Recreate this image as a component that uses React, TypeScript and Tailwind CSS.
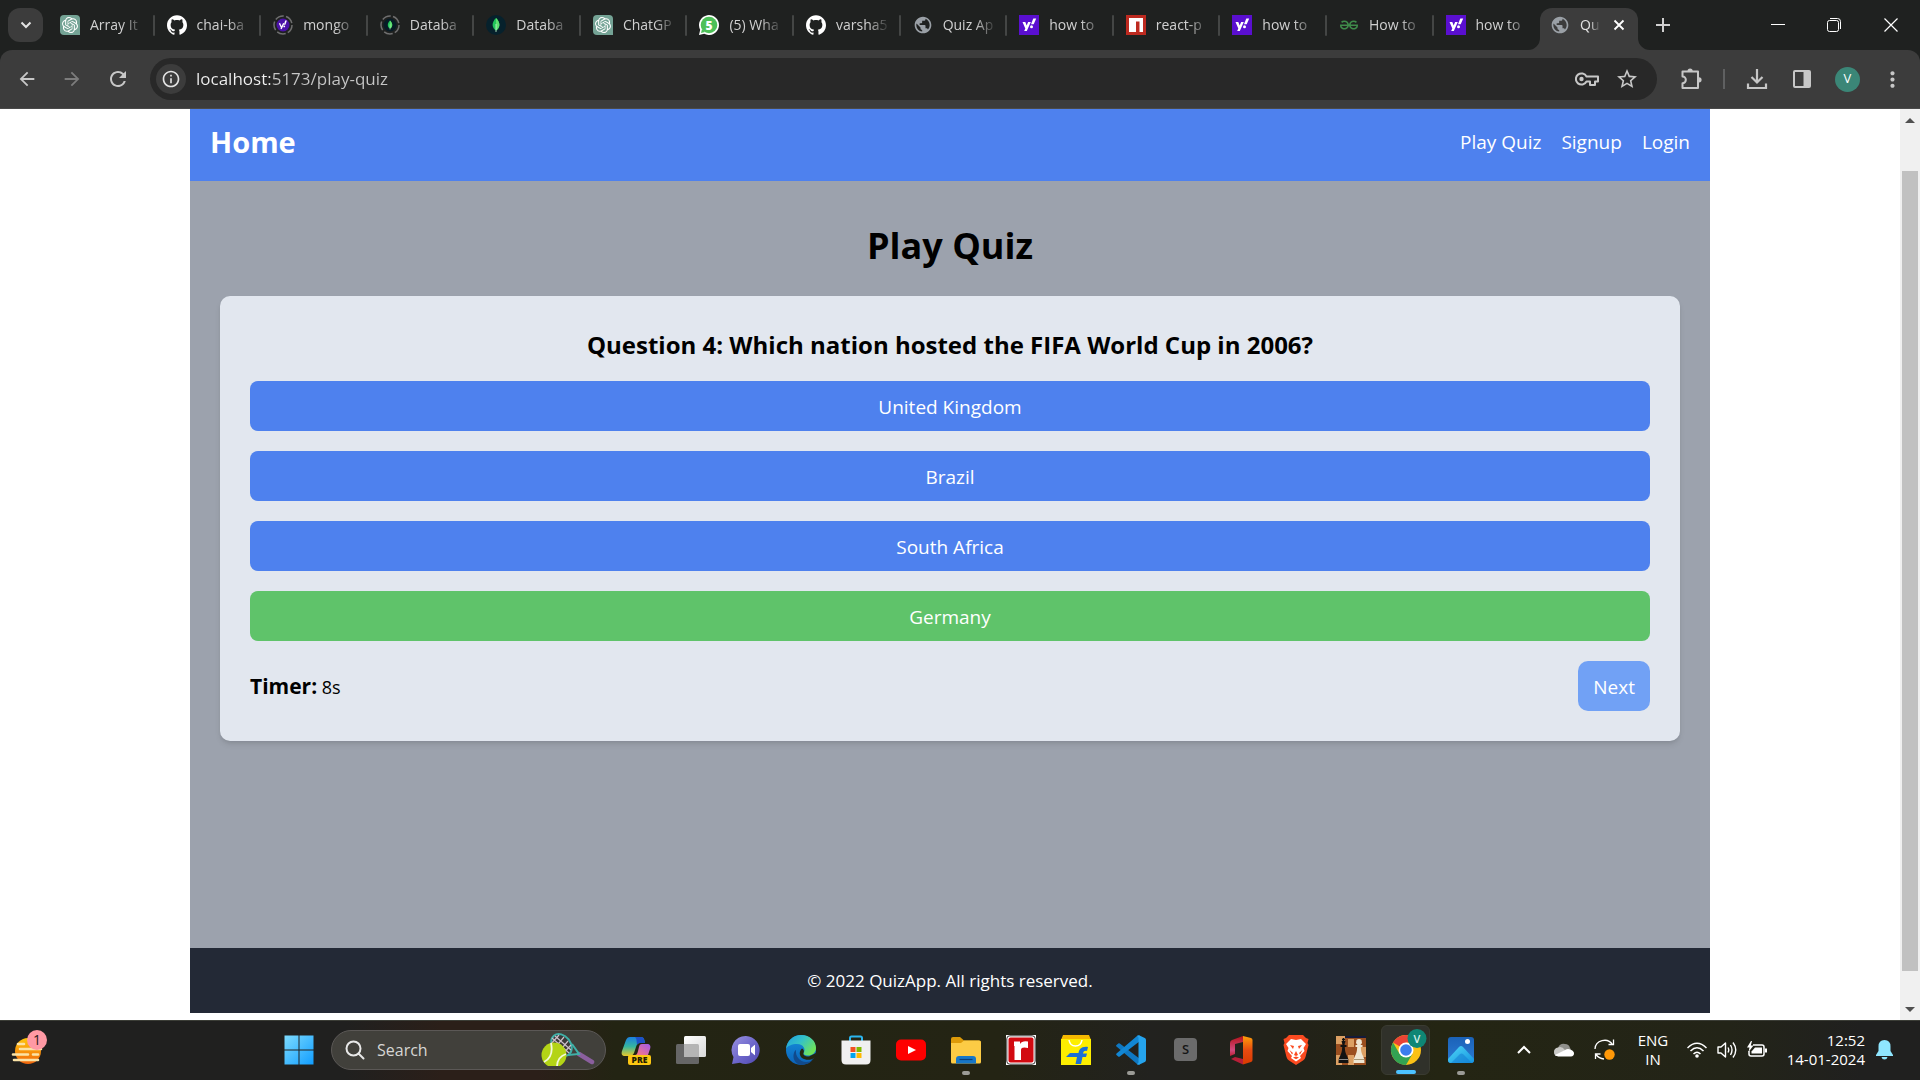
import type { ReactNode } from "react";
import { SiOpenai, SiGithub, SiGeeksforgeeks } from "react-icons/si";
import { MdArrowBack, MdArrowForward, MdRefresh, MdInfoOutline, MdMoreVert, MdStarOutline, MdPublic } from "react-icons/md";

/* ---------- Favicons ---------- */

const OpenAiFavicon = () => (
  <span className="flex h-5 w-5 items-center justify-center rounded-t-sm rounded-bl-sm bg-[#74a395]">
    <SiOpenai className="h-4 w-4 text-white" />
  </span>
);

const GithubFavicon = () => <SiGithub className="h-5 w-5 text-white" />;

const LoadingRing = ({ children }: { children: ReactNode }) => (
  <svg viewBox="0 0 20 20" className="h-5 w-5">
    <circle cx="10" cy="10" r="9" fill="none" stroke="#6f6f6f" strokeWidth="1.5" strokeDasharray="9 2.3" />
    {children}
  </svg>
);

const YahooSleeping = () => (
  <LoadingRing>
    <circle cx="10" cy="10" r="6.500" fill="#4b11a8" />
    <g transform="translate(4.600 4.500) scale(.53)">
      <path d="M3.500 7L7.800 16M11.500 7L6.500 18" stroke="#fff" strokeWidth="2.600" />
      <path d="M14.300 2H17.500L14.700 10H12Z" fill="#fff" />
      <circle cx="12.500" cy="13" r="1.700" fill="#fff" />
    </g>
  </LoadingRing>
);

const Leaf = ({ scale = 1 }: { scale?: number }) => (
  <g transform={`translate(10 10) scale(${scale})`}>
    <path d="M0-7C-5-2-4 3 0 5.500C4 3 5-2 0-7Z" fill="#21c45a" />
    <path d="M0-7C5-2 4 3 0 5.500Z" fill="#5de06f" />
    <path d="M0-1V7" stroke="#c8f5cf" strokeWidth=".8" />
  </g>
);

const MongoSleeping = () => (
  <LoadingRing>
    <circle cx="10" cy="10" r="6.500" fill="#071b26" />
    <Leaf scale={0.65} />
  </LoadingRing>
);

const MongoFavicon = () => (
  <svg viewBox="0 0 20 20" className="h-5 w-5">
    <circle cx="10" cy="10" r="10" fill="#06212c" />
    <Leaf />
  </svg>
);

const WhatsappFavicon = () => (
  <svg viewBox="0 0 20 20" className="h-5 w-5">
    <path d="M0 20L1.200 14.800A10 10 0 1 1 5.200 18.800Z" fill="#fff" />
    <circle cx="10" cy="10" r="8.300" fill="#4dc058" />
    <path d="M2 18L3 14L6 17Z" fill="#4dc058" />
    <text x="10" y="14.500" textAnchor="middle" fontSize="12" fontWeight="800" fontFamily="Open Sans, sans-serif" fill="#fff">
      5
    </text>
  </svg>
);

const YahooFavicon = () => (
  <svg viewBox="0 0 20 20" className="h-5 w-5">
    <path d="M0 0H20V20H0Z" fill="#5a0fd0" />
    <path d="M3.500 7H6.300L7.700 10.500L9.100 7H11.800L7.800 16H5.200L6.300 13.500Z" fill="#fff" />
    <path d="M14.300 3.500H17.200L14.700 9.300H12Z" fill="#fff" />
    <circle cx="12.500" cy="11.800" r="1.500" fill="#fff" />
  </svg>
);

const NpmFavicon = () => (
  <svg viewBox="0 0 20 20" className="h-5 w-5">
    <path d="M0 0H20V20H0Z" fill="#bd2a20" />
    <path d="M3 3H17V17H13.500V6.500H10V17H3Z" fill="#fff" />
  </svg>
);

const GfgFavicon = () => <SiGeeksforgeeks className="h-5 w-5 p-px text-[#3f8a4a]" />;
const GlobeFavicon = () => <MdPublic className="h-5 w-5 text-[#9aa0a6]" />;

const tabs: { label: string; icon: ReactNode }[] = [
  { label: "Array It", icon: <OpenAiFavicon /> },
  { label: "chai-ba", icon: <GithubFavicon /> },
  { label: "mongo", icon: <YahooSleeping /> },
  { label: "Databa", icon: <MongoSleeping /> },
  { label: "Databa", icon: <MongoFavicon /> },
  { label: "ChatGP", icon: <OpenAiFavicon /> },
  { label: "(5) Wha", icon: <WhatsappFavicon /> },
  { label: "varsha5", icon: <GithubFavicon /> },
  { label: "Quiz Ap", icon: <GlobeFavicon /> },
  { label: "how to", icon: <YahooFavicon /> },
  { label: "react-p", icon: <NpmFavicon /> },
  { label: "how to", icon: <YahooFavicon /> },
  { label: "How to", icon: <GfgFavicon /> },
  { label: "how to", icon: <YahooFavicon /> },
];

function TabStrip() {
  return (
    <div className="flex h-[50px] shrink-0 items-center bg-[#1f2120] text-[#d0d0d0]">
      <div className="flex w-12 shrink-0 pl-2">
        <button aria-label="Search tabs" className="flex h-[34px] w-[35px] items-center justify-center rounded-xl bg-[#3c3c3c]">
          <svg viewBox="0 0 12 12" className="h-3 w-3" fill="none" stroke="#e3e3e3" strokeWidth="2">
            <path d="M1.500 3.500L6 8L10.500 3.500" />
          </svg>
        </button>
      </div>
      <div className="flex min-w-0 flex-1">
        {tabs.map((t, i) => (
          <button key={i} className="flex min-w-0 flex-1 items-center pl-3 text-left">
            <span className="shrink-0">{t.icon}</span>
            <span className="ml-[10px] mr-1 block min-w-0 flex-1 overflow-hidden whitespace-nowrap text-[14px] leading-5 [mask-image:linear-gradient(to_right,black_32px,transparent_54px)]">
              {t.label}
            </span>
            <span className={i === tabs.length - 1 ? "w-[2px]" : "h-[21px] w-[2px] rounded bg-[#444645]"} />
          </button>
        ))}
      </div>
      <div className="relative flex h-[42px] w-[98px] shrink-0 items-center self-end rounded-t-xl bg-[#3c3c3c] pb-2 pl-[10px] text-[#e3e3e3]">
        <svg viewBox="0 0 12 12" className="absolute -left-3 bottom-0 h-3 w-3">
          <path d="M12 0V12H0A12 12 0 0 0 12 0Z" fill="#3c3c3c" />
        </svg>
        <svg viewBox="0 0 12 12" className="absolute -right-3 bottom-0 h-3 w-3">
          <path d="M0 0V12H12A12 12 0 0 1 0 0Z" fill="#3c3c3c" />
        </svg>
        <GlobeFavicon />
        <span className="ml-[10px] block w-5 whitespace-nowrap text-[14px] leading-5 [mask-image:linear-gradient(to_right,black_50%,transparent)]">
          Qu
        </span>
        <button aria-label="Close tab" className="ml-[9px] p-1">
          <svg viewBox="0 0 12 12" className="h-3 w-3" stroke="#fff" strokeWidth="1.800">
            <path d="M1.500 1.500L10.500 10.500M10.500 1.500L1.500 10.500" />
          </svg>
        </button>
      </div>
      <button aria-label="New tab" className="ml-[18px] shrink-0">
        <svg viewBox="0 0 14 14" className="h-[14px] w-[14px]" stroke="#d0d0d0" strokeWidth="2">
          <path d="M7 0V14M0 7H14" />
        </svg>
      </button>
      <div className="flex w-[250px] shrink-0 justify-end">
        <button aria-label="Minimise" className="flex h-10 w-14 items-center justify-center">
          <svg viewBox="0 0 14 14" className="h-[14px] w-[14px]" stroke="#fff">
            <path d="M0 6.500H14" />
          </svg>
        </button>
        <button aria-label="Restore" className="flex h-10 w-14 items-center justify-center">
          <svg viewBox="0 0 14 14" className="h-[14px] w-[14px]" stroke="#fff" fill="none">
            <rect x=".5" y="2.500" width="11" height="11" rx="2" />
            <path d="M3 .5H10.500A3 3 0 0 1 13.500 3.500V11" />
          </svg>
        </button>
        <button aria-label="Close" className="flex h-10 w-[58px] items-center justify-center">
          <svg viewBox="0 0 14 14" className="h-[14px] w-[14px]" stroke="#fff" strokeWidth="1.200">
            <path d="M.5 .5L13.500 13.500M13.500 .5L.5 13.500" />
          </svg>
        </button>
      </div>
    </div>
  );
}

function Toolbar() {
  return (
    <div className="shrink-0 bg-[#1f2120]">
      <div className="flex h-[59px] items-center rounded-t-xl border-b border-[#4a4a4a] bg-[#3c3c3c] text-[#c7c7c7]">
        <div className="flex w-[150px] shrink-0 items-center pl-4">
          <button aria-label="Back" className="w-[45px]"><MdArrowBack className="h-[22px] w-[22px]" /></button>
          <button aria-label="Forward" className="w-[45px] text-[#7c7c7c]"><MdArrowForward className="h-[22px] w-[22px]" /></button>
          <button aria-label="Reload"><MdRefresh className="h-6 w-6" /></button>
        </div>
        <div className="flex h-[42px] min-w-0 flex-1 items-center rounded-full bg-[#282828] pl-[6px] pr-[18px]">
          <button aria-label="Site information" className="flex h-[30px] w-[30px] items-center justify-center rounded-full bg-[#3c3c3c]">
            <MdInfoOutline className="h-5 w-5 text-[#e3e3e3]" />
          </button>
          <input
            aria-label="Address"
            defaultValue="localhost:5173/play-quiz"
            className="ml-[10px] min-w-0 flex-1 bg-[linear-gradient(90deg,#f1f1f1_74px,#c7c7c7_74px)] bg-clip-text text-[17px] leading-6 text-transparent outline-none"
          />
          <button aria-label="Passwords">
            <svg viewBox="0 0 24 14" className="h-[14px] w-6" fill="none" stroke="#c7c7c7" strokeWidth="2">
              <path d="M11.500 4.500A5.600 5.600 0 1 0 11.500 9.500H15V13H20V9.500H23V4.500Z" strokeLinejoin="round" />
              <circle cx="6.500" cy="7" r="2.200" fill="#c7c7c7" stroke="none" />
            </svg>
          </button>
          <button aria-label="Bookmark" className="ml-4"><MdStarOutline className="h-6 w-6" /></button>
        </div>
        <div className="flex w-[263px] shrink-0 items-center pl-[23px]">
          <button aria-label="Extensions">
            <svg viewBox="0 0 22 22" className="h-[22px] w-[22px]" fill="none" stroke="#c7c7c7" strokeWidth="2" strokeLinejoin="round">
              <path d="M2.500 3.500H18V20H2.500V15.200A3 3 0 0 0 2.500 8.500Z" />
              <path d="M7.500 3A2.600 2.600 0 0 1 12.700 3ZM19 9.200A2.600 2.600 0 0 1 19 14.400Z" fill="#c7c7c7" stroke="none" />
            </svg>
          </button>
          <span className="ml-[21px] h-5 w-[2px] bg-[#5f6061]" />
          <button aria-label="Downloads" className="ml-[21px]">
            <svg viewBox="0 0 22 22" className="h-[22px] w-[22px]" fill="none" stroke="#c7c7c7" strokeWidth="2.200">
              <path d="M11 1V14M5.500 9L11 14.500L16.500 9M2 15.500V20H20V15.500" />
            </svg>
          </button>
          <button aria-label="Side panel" className="ml-6">
            <svg viewBox="0 0 20 20" className="h-5 w-5">
              <rect x="2" y="2" width="16" height="16" rx="1" fill="none" stroke="#c7c7c7" strokeWidth="2" />
              <path d="M11.500 2H18V18H11.500Z" fill="#c7c7c7" />
            </svg>
          </button>
          <button aria-label="Profile" className="ml-[23px] flex h-[25px] w-[25px] items-center justify-center rounded-full bg-[#3b8677] text-[13px] text-white">
            V
          </button>
          <button aria-label="Menu" className="ml-5"><MdMoreVert className="h-[25px] w-[25px]" /></button>
        </div>
      </div>
    </div>
  );
}

/* ---------- Quiz page ---------- */

const answers = [
  { text: "United Kingdom", style: "bg-[#4e81ee]" },
  { text: "Brazil", style: "bg-[#4e81ee]" },
  { text: "South Africa", style: "bg-[#4e81ee]" },
  { text: "Germany", style: "bg-[#5fc36a]" },
];

function QuizPage() {
  return (
    <div className="mx-auto flex w-4/5 flex-col">
      <nav className="flex h-[72px] shrink-0 items-center justify-between bg-[#4e81ee] px-5 pb-[6px] text-white">
        <a href="#home" className="text-[29px] font-bold leading-9">Home</a>
        <div className="flex gap-5 text-[19px] leading-[30px]">
          <a href="#play">Play Quiz</a>
          <a href="#signup">Signup</a>
          <a href="#login">Login</a>
        </div>
      </nav>
      <main className="flex-1 bg-[#9ca2ad] px-[30px] pt-[42px] text-black">
        <h1 className="mb-7 text-center text-[36px] font-bold leading-[45px]">Play Quiz</h1>
        <section className="rounded-[10px] bg-[#e2e7ef] p-[30px] shadow-md">
          <h2 className="mb-[17px] text-center text-[24px] font-bold leading-[38px]">
            Question 4: Which nation hosted the FIFA World Cup in 2006?
          </h2>
          <div className="grid gap-5">
            {answers.map((a) => (
              <button key={a.text} className={`${a.style} h-[50px] w-full rounded-lg pt-[2px] text-[19px] leading-[30px] text-white`}>
                {a.text}
              </button>
            ))}
          </div>
          <div className="mt-5 flex items-center justify-between">
            <p className="text-[18px] leading-[30px]">
              <span className="text-[21px] font-bold">Timer:</span> 8s
            </p>
            <button className="h-[50px] rounded-[10px] bg-[#71a1f5] px-[15px] pt-[2px] text-[19px] leading-[30px] text-white">Next</button>
          </div>
        </section>
      </main>
      <footer className="flex h-[65px] shrink-0 items-center justify-center bg-[#232936] text-[17px] leading-6 text-white">
        <p>© 2022 QuizApp. All rights reserved.</p>
      </footer>
    </div>
  );
}

function Scrollbar() {
  return (
    <div className="flex w-5 shrink-0 flex-col items-center bg-[#f0f0f0]">
      <svg viewBox="0 0 10 22" className="h-[22px] w-[10px]"><path d="M0 14L5 9L10 14Z" fill="#505050" /></svg>
      <div className="flex w-4 flex-1 flex-col">
        <div className="flex-[40]" />
        <div className="flex-[800] bg-[#c1c1c1]" />
        <div className="flex-[27]" />
      </div>
      <svg viewBox="0 0 10 22" className="h-[22px] w-[10px]"><path d="M0 9L5 14L10 9Z" fill="#505050" /></svg>
    </div>
  );
}

/* ---------- Taskbar ---------- */

const Copilot = () => (
  <svg viewBox="0 0 30 30" className="h-[30px] w-[30px]">
    <defs>
      <linearGradient id="cpA" x1="0" y1="0" x2="0" y2="1">
        <stop offset="0" stopColor="#1b7fe0" /><stop offset=".5" stopColor="#35b5a0" /><stop offset="1" stopColor="#e8c928" />
      </linearGradient>
      <linearGradient id="cpB" x1="1" y1="0" x2="0" y2="1">
        <stop offset="0" stopColor="#a259ee" /><stop offset="1" stopColor="#ff7a7a" />
      </linearGradient>
    </defs>
    <path d="M9 2H20C23 2 23.500 5 24 8H19C17 8 16 9 15 12L13 18C12 20 11 21 8 21H4C1 21 0 19 1 16L5 5C6 3 7 2 9 2Z" fill="url(#cpA)" />
    <path d="M14 2H20C23 2 23.500 5 24 8H19C17 8 16.500 9 16 10C15.500 6 16 4 14 2Z" fill="#1d50c8" />
    <path d="M21 9H26C29 9 30 11 29 14L27 20H14C16 20 16.500 18 17 16L18 12C18.500 10 19 9 21 9Z" fill="url(#cpB)" />
    <rect x="7" y="20" width="23" height="10" rx="2" fill="#fcc712" />
    <text x="18.500" y="28.300" textAnchor="middle" fontSize="8.500" fontWeight="800" fontFamily="Open Sans, sans-serif" fill="#241d00">PRE</text>
  </svg>
);

const TaskView = () => (
  <svg viewBox="0 0 30 30" className="h-[30px] w-[30px]">
    <defs>
      <linearGradient id="tvA" x1="0" y1="0" x2="1" y2="1"><stop stopColor="#fff" /><stop offset="1" stopColor="#d9d9d9" /></linearGradient>
    </defs>
    <rect x="0" y="9" width="23" height="20" rx="1.500" fill="#666" />
    <rect x="8" y="1" width="22" height="21" rx="1.500" fill="url(#tvA)" />
    <path d="M8 9H21.500Q23 9 23 10.500V22H9.500Q8 22 8 20.500Z" fill="#b5b5b5" />
  </svg>
);

const Chat = () => (
  <svg viewBox="0 0 30 30" className="h-[30px] w-[30px]">
    <defs>
      <linearGradient id="chA" x1="0" y1="0" x2="1" y2="1"><stop stopColor="#9a93e0" /><stop offset=".5" stopColor="#6f68cc" /><stop offset="1" stopColor="#4f48b0" /></linearGradient>
    </defs>
    <path d="M15 1A14 14 0 1 1 9 27.800L1 29L2.500 22A14 14 0 0 1 15 1Z" fill="url(#chA)" />
    <rect x="7" y="9" width="12" height="12" rx="2" fill="#fff" />
    <path d="M20 13L23.500 10Q24 9.500 24 10.500V19.500Q24 20.500 23.500 20L20 17Z" fill="#fff" />
  </svg>
);

const Edge = () => (
  <svg viewBox="0 0 30 30" className="h-[30px] w-[30px]">
    <defs>
      <linearGradient id="edA" x1="0" y1="0" x2="1" y2=".6"><stop stopColor="#1f9de0" /><stop offset=".5" stopColor="#34c2c8" /><stop offset="1" stopColor="#6fe35a" /></linearGradient>
      <linearGradient id="edB" x1="0" y1="0" x2="0" y2="1"><stop stopColor="#1590dd" /><stop offset="1" stopColor="#0b62b8" /></linearGradient>
    </defs>
    <circle cx="15" cy="15" r="15" fill="url(#edB)" />
    <path d="M0 14C1 5 8 0 15 0C24 0 30 6 30 13C30 18 26 20.500 22 20.500C19 20.500 17 19 17.500 18C20 15 18 9 11 9C6 9 1 11 0 14Z" fill="url(#edA)" />
    <path d="M10 15C9 21 14 27 20 27C23 27 26 26 28 23C25 28 20 30 15 30C10 29 7 25 7.500 20C8 17 9 15.500 10 15Z" fill="#114a8b" />
    <path d="M17.500 18C16.500 20 20 22 23 21.500L30 18C30 26 20 26 16 23C13 20.500 13 16 16 13.500C18.500 15 18 17 17.500 18Z" fill="#25260f" />
  </svg>
);

const Store = () => (
  <svg viewBox="0 0 30 30" className="h-[30px] w-[30px]">
    <path d="M9 6V3Q9 1.500 10.500 1.500H19.500Q21 1.500 21 3V6" fill="none" stroke="#2bb5ee" strokeWidth="2" />
    <path d="M.5 5.500H29.500V25Q29.500 29.500 25 29.500H5Q.5 29.500 .5 25Z" fill="#f0f0f0" />
    <path d="M9.500 12H14.500V17H9.500Z" fill="#f25022" />
    <path d="M15.500 12H20.500V17H15.500Z" fill="#7fba00" />
    <path d="M9.500 18H14.500V23H9.500Z" fill="#00a4ef" />
    <path d="M15.500 18H20.500V23H15.500Z" fill="#ffb900" />
  </svg>
);

const YouTube = () => (
  <svg viewBox="0 0 30 30" className="h-[30px] w-[30px]">
    <rect x="0" y="4.500" width="30" height="21" rx="5" fill="#fe0000" />
    <path d="M12 11L20 15L12 19Z" fill="#fff" />
  </svg>
);

const Folder = () => (
  <svg viewBox="0 0 30 30" className="h-[30px] w-[30px]">
    <path d="M0 4Q0 2 2 2H9L13 5.500H28Q30 5.500 30 7V12H0Z" fill="#dd9a09" />
    <path d="M0 8H10L13 5.500H28Q30 5.500 30 7.500V27Q30 28.500 28.500 28.500H1.500Q0 28.500 0 27Z" fill="#fccb45" />
    <path d="M5 28.500V24Q5 21 8 21H22Q25 21 25 24V28.500Z" fill="#1777c8" />
    <path d="M8.500 24.500H21.500" stroke="#0b3f7a" strokeWidth="1.200" />
  </svg>
);

const RedR = () => (
  <svg viewBox="0 0 30 30" className="h-[30px] w-[30px]">
    <path d="M0 0H30V30H0Z" fill="#fff" />
    <rect x=".8" y=".8" width="28.400" height="28.400" rx="3" fill="#fff" stroke="#333" />
    <rect x="2.500" y="2.500" width="25" height="25" rx="2" fill="#d20a11" />
    <path d="M8 6.500H14V9Q16 5.500 22 6.500V13Q15 11.500 15 15V25H8.500V11H8Z" fill="#fff" />
  </svg>
);

const Flipkart = () => (
  <svg viewBox="0 0 30 30" className="h-[30px] w-[30px]">
    <path d="M2 0H28L30 5H0Z" fill="#f5b800" />
    <path d="M0 4H30V30H0Z" fill="#fdee00" />
    <path d="M8 5Q9 11 14.500 11T21 5" fill="none" stroke="#fff" strokeWidth="1.500" />
    <path d="M27 12C20 11 18 15 17.500 18H9L5 22H16L14.500 29H20L21.500 22H25L26 18.500H22C22.500 16 24 15.500 26 16Z" fill="#1b6fd6" />
  </svg>
);

const VsCode = () => (
  <svg viewBox="0 0 30 30" className="h-[30px] w-[30px]">
    <path d="M.5 11.500Q-.3 10.700 .5 10L2.200 8.500Q3 8 3.800 8.500L24 24V29.500L21 29Z" fill="#0f78c2" />
    <path d="M.5 18.500Q-.3 19.300 .5 20L2.200 21.500Q3 22 3.800 21.500L24 6V.5L21 1Z" fill="#1287d4" />
    <path d="M21 .8Q22 -.2 23.500 .4L28.800 3Q30 3.600 30 5V25Q30 26.400 28.800 27L23.500 29.600Q22 30.200 21 29.200L22.500 27.500V2.500Z" fill="#25a4ee" />
  </svg>
);

const LetterS = () => (
  <span className="flex h-[23px] w-[23px] items-center justify-center rounded-sm bg-[#6b6b6b] text-[13px] font-semibold leading-none text-[#161616]">S</span>
);

const Office = () => (
  <svg viewBox="0 0 30 30" className="h-[30px] w-[30px]">
    <defs>
      <linearGradient id="ofA" x1="0" y1="0" x2="0" y2="1"><stop stopColor="#b3121a" /><stop offset=".7" stopColor="#d14a7e" /><stop offset="1" stopColor="#c02035" /></linearGradient>
      <linearGradient id="ofB" x1="0" y1="0" x2="0" y2="1"><stop stopColor="#ff9f0a" /><stop offset=".5" stopColor="#e84a10" /><stop offset="1" stopColor="#d83b01" /></linearGradient>
    </defs>
    <path d="M17 1L6 5Q4 6 4 8V21L9 19V9L17 7Z" fill="url(#ofA)" />
    <path d="M9 22L17 24V29.500L5 24Z" fill="#b81f38" />
    <path d="M17 1L25 3Q26.500 3.500 26.500 5V25Q26.500 26.500 25 27L17 29.500Z" fill="url(#ofB)" />
  </svg>
);

const Brave = () => (
  <svg viewBox="0 0 30 30" className="h-[30px] w-[30px]">
    <path d="M8 0H22L25 3L27.500 4L26.500 8L27.500 10L24.500 22Q24 24 22 25.500L15 30L8 25.500Q6 24 5.500 22L2.500 10L3.500 8L2.500 4L5 3Z" fill="#fb4a20" />
    <path d="M10 4L15 5L20 4L25 9L22.500 13L23.500 16L19 21L20 23L15 26.500L10 23L11 21L6.500 16L7.500 13L5 9Z" fill="#fff" />
    <path d="M9 10L13 11L12 14ZM21 10L17 11L18 14ZM15 16L17 20L15 21L13 20ZM8.500 15L12 18L11 19.500ZM21.500 15L18 18L19 19.500ZM12 22.500L15 21.500L18 22.500L15 24.200Z" fill="#fb4a20" />
  </svg>
);

const Chess = () => (
  <svg viewBox="0 0 30 30" className="h-[30px] w-[30px]">
    <path d="M0 1H30V30H0Z" fill="#9b4f1f" />
    <path d="M0 1H9V9H0ZM12 4H18V12H12ZM0 20H6V30H0ZM24 12H30V22H24ZM12 20H18V30H12Z" fill="#dca063" />
    <path d="M9 1H30V3H9Z" fill="#131a3a" />
    <path d="M7.500 3V6M6 4.500H9" stroke="#111" strokeWidth="1.300" />
    <path d="M5.500 6H9.500L8.500 10H10.500V12H8.800Q9 18 11 21Q13 24 12.500 28H2.500Q2 24 4 21Q6 18 6.200 12H4.500V10H6.500Z" fill="#121212" />
    <path d="M3 24.500H12" stroke="#8a8a8a" />
    <path d="M20.500 5Q23 3 25.500 5L26 8L24.500 10H26.500V12H24.800Q25 18 27 21Q29 24 28.500 28H17.500Q17 24 19 21Q21 18 21.200 12H19.500V10H21.500L20 8Z" fill="#efe6d2" />
    <path d="M18 24.500H28" stroke="#a99a78" />
  </svg>
);

const ChromeLogo = () => (
  <svg viewBox="0 0 34 34" className="h-[34px] w-[34px] overflow-visible">
    <g transform="translate(15 19)">
      <circle r="15" fill="#fbc116" />
      <path d="M0 0L-13 -7.500A15 15 0 0 1 13 -7.500H0Z" fill="#ea4335" />
      <path d="M-13 -7.500A15 15 0 0 0 0 15L6.500 3.750L0 7L-6.500 3.750Z" fill="#33a353" />
      <circle r="7.500" fill="#fff" />
      <circle r="5.800" fill="#3b7ded" />
    </g>
    <circle cx="26" cy="7.500" r="9.500" fill="#0f8675" />
    <text x="26" y="11.500" textAnchor="middle" fontSize="11" fontWeight="600" fontFamily="Open Sans, sans-serif" fill="#d5efea">V</text>
  </svg>
);

const Photos = () => (
  <svg viewBox="0 0 30 30" className="h-[30px] w-[30px]">
    <defs>
      <linearGradient id="phA" x1="0" y1="0" x2="0" y2="1"><stop stopColor="#1b62b8" /><stop offset="1" stopColor="#2b7bd4" /></linearGradient>
      <linearGradient id="phB" x1="0" y1="0" x2="1" y2="1"><stop stopColor="#50d7f7" /><stop offset="1" stopColor="#1494e0" /></linearGradient>
    </defs>
    <rect x="2" y="2" width="26" height="26" rx="3" fill="url(#phA)" />
    <path d="M2 24L13 12Q15 10 17 12L28 24V25Q28 28 25 28H5Q2 28 2 25Z" fill="url(#phB)" />
    <path d="M5 28L14 19Q15.500 18 17 19L26 28Z" fill="#1278cf" opacity=".5" />
    <circle cx="21.500" cy="6.500" r="2.500" fill="#fff" />
  </svg>
);

const apps: { name: string; icon: ReactNode; mark?: "open" | "active" }[] = [
  { name: "Copilot", icon: <Copilot /> },
  { name: "Task view", icon: <TaskView /> },
  { name: "Chat", icon: <Chat /> },
  { name: "Edge", icon: <Edge /> },
  { name: "Store", icon: <Store /> },
  { name: "YouTube", icon: <YouTube /> },
  { name: "File Explorer", icon: <Folder />, mark: "open" },
  { name: "Reader", icon: <RedR /> },
  { name: "Flipkart", icon: <Flipkart /> },
  { name: "Visual Studio Code", icon: <VsCode />, mark: "open" },
  { name: "S", icon: <LetterS /> },
  { name: "Office", icon: <Office /> },
  { name: "Brave", icon: <Brave /> },
  { name: "Chess", icon: <Chess /> },
  { name: "Chrome", icon: <ChromeLogo />, mark: "active" },
  { name: "Photos", icon: <Photos />, mark: "open" },
];

const Weather = () => (
  <svg viewBox="0 0 40 40" className="h-10 w-10">
    <defs>
      <linearGradient id="sun" x1="0" y1="0" x2="0" y2="1"><stop stopColor="#ffc60a" /><stop offset="1" stopColor="#f0650c" /></linearGradient>
    </defs>
    <circle cx="18" cy="21" r="13" fill="url(#sun)" />
    <path d="M8 14H14M10 19H31M3 24.500H18M23 24.500H28M4 30H28" stroke="#fbe3a6" strokeWidth="2.600" strokeLinecap="round" />
    <circle cx="27" cy="10" r="10" fill="#ff99a4" />
    <text x="27" y="15" textAnchor="middle" fontSize="14" fontFamily="Open Sans, sans-serif" fill="#2b1a1c">1</text>
  </svg>
);

const Tennis = () => (
  <svg viewBox="0 0 54 34" className="h-[34px] w-[54px]">
    <path d="M38 21L51 29" stroke="#8a5f9e" strokeWidth="4.500" strokeLinecap="round" />
    <path d="M27 22L38 21L31 11" fill="none" stroke="#3fb0a8" strokeWidth="2" />
    <ellipse cx="20.500" cy="12" rx="9" ry="12" transform="rotate(-38 20.500 12)" fill="#3b3838" stroke="#3fb0a8" strokeWidth="2" />
    <path d="M11 5L28 20M14 3L30 17M11 10L22 21M13 16L23 4M17 20L27 8M10 11L18 2M21 22L30 12" stroke="#cdbfca" strokeWidth="1.200" />
    <clipPath id="ballClip"><path d="M0 0H54V33H0Z" /></clipPath>
    <g clipPath="url(#ballClip)">
      <circle cx="13" cy="22" r="12.500" fill="#b4d416" />
      <path d="M3 29Q13 24 10 10M16 34Q16 24 25 21" fill="none" stroke="#f3f8dc" strokeWidth="1.800" />
    </g>
  </svg>
);

function Taskbar() {
  return (
    <div className="flex h-[60px] shrink-0 items-center border-t border-[#3b3d36] bg-[linear-gradient(90deg,#20201f_0%,#20201f_18%,#2b1f19_23%,#2b1f19_28%,#232413_32%,#242414_52%,#22221f_60%,#222218_68%,#242513_75%,#232418_90%,#20201f_97%)] pb-[2px] text-white">
      <div className="w-[271px] shrink-0">
        <button aria-label="Weather" className="ml-[10px] block"><Weather /></button>
      </div>
      <button aria-label="Start" className="flex h-full w-[55px] shrink-0 items-center justify-center">
        <svg viewBox="0 0 30 30" className="h-[30px] w-[30px]">
          <defs>
            <linearGradient id="win" gradientUnits="userSpaceOnUse" x1="0" y1="0" x2="30" y2="30"><stop stopColor="#7fdcfd" /><stop offset="1" stopColor="#0f9cff" /></linearGradient>
          </defs>
          <path d="M.5 .5H14.500V14.500H.5ZM15.500 .5H29.500V14.500H15.500ZM.5 15.500H14.500V29.500H.5ZM15.500 15.500H29.500V29.500H15.500Z" fill="url(#win)" />
        </svg>
      </button>
      <label className="ml-[5px] flex h-10 w-[275px] shrink-0 items-center rounded-full border border-[#5b5856] bg-[#41403b] pl-[13px] pr-[10px]">
        <svg viewBox="0 0 20 20" className="h-5 w-5" fill="none" stroke="#e8e8e8" strokeWidth="2">
          <circle cx="8.500" cy="8.500" r="7" />
          <path d="M13.500 13.500L18.500 18.500" strokeLinecap="round" />
        </svg>
        <input aria-label="Search" placeholder="Search" className="ml-3 min-w-0 flex-1 bg-transparent text-[16px] leading-6 outline-none placeholder:text-[#d6d6d4]" />
        <Tennis />
      </label>
      <div className="ml-[2px] flex">
        {apps.map((a) => (
          <button
            key={a.name}
            aria-label={a.name}
            className={
              a.mark === "active"
                ? "relative mx-[3px] flex h-[50px] w-[49px] items-center justify-center rounded-md border border-[#3a3b31] bg-[#30312a] pb-1 pl-1"
                : "relative flex h-[50px] w-[55px] items-center justify-center"
            }
          >
            {a.icon}
            {a.mark === "open" && <span className="absolute bottom-0 left-1/2 h-1 w-2 -translate-x-1/2 rounded-full bg-[#9b9b96]" />}
            {a.mark === "active" && <span className="absolute bottom-0 left-1/2 h-1 w-5 -translate-x-1/2 rounded-full bg-[#4cc2ff]" />}
          </button>
        ))}
      </div>
      <div className="ml-auto flex shrink-0 items-center pr-[27px] text-[15px] leading-[19px]">
        <button aria-label="Show hidden icons" className="flex w-10 justify-center">
          <svg viewBox="0 0 14 10" className="h-[10px] w-[14px]" fill="none" stroke="#fff" strokeWidth="2"><path d="M1 8L7 2L13 8" /></svg>
        </button>
        <button aria-label="Cloud storage" className="flex w-10 justify-center">
          <svg viewBox="0 0 20 14" className="h-[14px] w-5">
            <path d="M1 12Q-1 6 4 5Q6 0 11 1Q15 1 16 5L18 8Z" fill="#8f8f8b" />
            <path d="M4 4.500Q8 3 11 7L4 13Q0 13 0 9T4 4.500Z" fill="#c9c9c6" />
            <path d="M3 13Q1 13 1 12L11 7Q14 5 17 7Q20 8 20 10.500T17 13.500H4Z" fill="#fff" />
          </svg>
        </button>
        <button aria-label="Updates" className="flex w-10 justify-center">
          <svg viewBox="0 0 21 21" className="h-[21px] w-[21px]" fill="none" stroke="#fff" strokeWidth="1.300">
            <path d="M1 10A9.500 9 0 0 1 18.500 5.500M19.500 .5V5.500H14.500M1.500 20V15H6.500M2 15.500Q5 19.500 10 20" />
            <circle cx="15.500" cy="15.500" r="5.200" fill="#ff9808" stroke="none" />
          </svg>
        </button>
        <div className="flex w-[58px] flex-col items-center">
          <span>ENG</span>
          <span>IN</span>
        </div>
        <button aria-label="Network" className="flex w-[30px] justify-center">
          <svg viewBox="0 0 20 16" className="h-4 w-5" fill="none" stroke="#fff" strokeWidth="1.500">
            <path d="M.5 6Q10-3.500 19.500 6M3.500 9Q10 2.500 16.500 9M6.500 12Q10 8.500 13.500 12" />
            <circle cx="10" cy="14" r="1.800" fill="#fff" stroke="none" />
          </svg>
        </button>
        <button aria-label="Volume" className="flex w-[30px] justify-center">
          <svg viewBox="0 0 20 18" className="h-[18px] w-5" fill="none" stroke="#fff" strokeWidth="1.400" strokeLinejoin="round">
            <path d="M1 6H4L8.500 2V16L4 12H1ZM11 6.500Q12.500 9 11 11.500M13.500 4Q16.500 9 13.500 14M16 1.500Q21.500 9 16 16.500" />
          </svg>
        </button>
        <button aria-label="Battery" className="flex w-[30px] justify-center">
          <svg viewBox="0 0 20 17" className="h-[17px] w-5" fill="none" stroke="#fff" strokeWidth="1.500">
            <path d="M6 4H15Q17 4 17 6V13Q17 15 15 15H4Q2 15 2 13V10" />
            <path d="M8 6.500H15V12.500H4.500V10.500Z" fill="#fff" stroke="none" />
            <path d="M18 7.500H20V11.500H18ZM4 0L0 6.500H2.500L1.500 11L6.500 4.500H3.800L5 0Z" fill="#fff" stroke="none" />
          </svg>
        </button>
        <div className="flex w-[93px] flex-col items-end">
          <span>12:52</span>
          <span>14-01-2024</span>
        </div>
        <button aria-label="Notifications" className="ml-[11px]">
          <svg viewBox="0 0 17 20" className="h-5 w-[17px]" fill="#8fe6ff">
            <path d="M8.500 0Q14.500 0 14.500 6.500V11L17 15V16H0V15L2.500 11V6.500Q2.500 0 8.500 0ZM5.500 17H11.500Q11 19.500 8.500 19.500T5.500 17Z" />
          </svg>
        </button>
      </div>
    </div>
  );
}

export default function App() {
  return (
    <div className="flex h-screen flex-col overflow-hidden bg-white font-['Open_Sans',sans-serif]">
      <TabStrip />
      <Toolbar />
      <div className="flex min-h-0 flex-1">
        <div className="flex min-w-0 flex-1 pb-[7px]">
          <QuizPage />
        </div>
        <Scrollbar />
      </div>
      <Taskbar />
    </div>
  );
}
